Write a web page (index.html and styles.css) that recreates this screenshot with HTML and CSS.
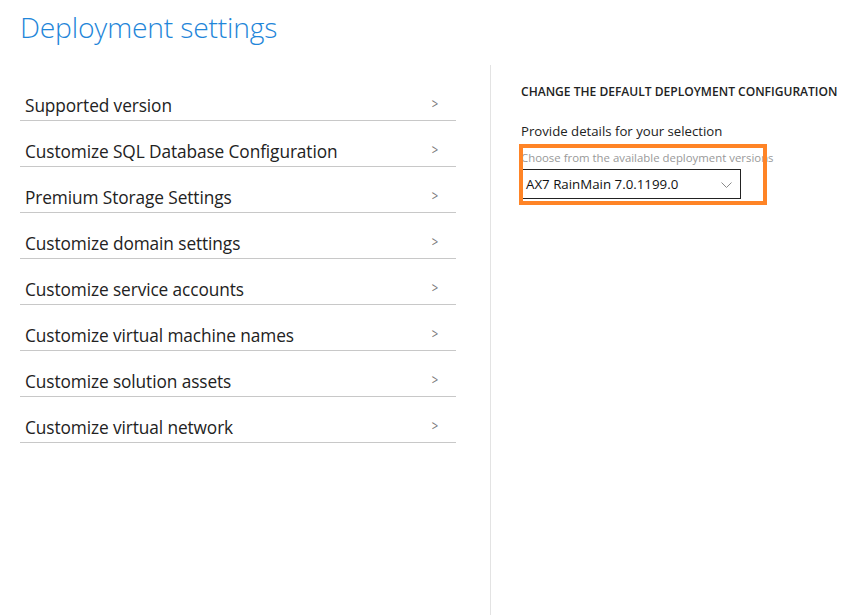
FILE: index.html
```html
<!DOCTYPE html>
<html lang="en">
<head>
<meta charset="utf-8">
<title>Deployment settings</title>
<link rel="stylesheet" href="styles.css">
</head>
<body>
<div class="page">
  <h1 class="title">Deployment settings</h1>
  <div class="columns">
    <ul class="menu">
      <li class="menu-item"><span>Supported version</span><span class="chev">&gt;</span></li>
      <li class="menu-item"><span>Customize SQL Database Configuration</span><span class="chev">&gt;</span></li>
      <li class="menu-item"><span>Premium Storage Settings</span><span class="chev">&gt;</span></li>
      <li class="menu-item"><span>Customize domain settings</span><span class="chev">&gt;</span></li>
      <li class="menu-item"><span>Customize service accounts</span><span class="chev">&gt;</span></li>
      <li class="menu-item"><span>Customize virtual machine names</span><span class="chev">&gt;</span></li>
      <li class="menu-item"><span>Customize solution assets</span><span class="chev">&gt;</span></li>
      <li class="menu-item"><span>Customize virtual network</span><span class="chev">&gt;</span></li>
    </ul>
    <div class="panel">
      <h2 class="panel-heading">CHANGE THE DEFAULT DEPLOYMENT CONFIGURATION</h2>
      <p class="panel-sub">Provide details for your selection</p>
      <div class="field">
        <div class="field-label">Choose from the available deployment versions</div>
        <div class="select">
          <span>AX7 RainMain 7.0.1199.0</span>
          <svg class="select-chev" width="11" height="7" viewBox="0 0 11 7"><path d="M0.5 0.5 L5.5 5.5 L10.5 0.5" fill="none" stroke="#8a8a8a" stroke-width="1"/></svg>
        </div>
        <div class="highlight"></div>
      </div>
    </div>
  </div>
</div>
</body>
</html>
```

FILE: styles.css
```css
* { box-sizing: border-box; }
html, body { margin: 0; padding: 0; background: #fff; }
body {
  font-family: "Open Sans", "Noto Sans", sans-serif;
  color: #222;
  width: 857px;
  height: 615px;
  overflow: hidden;
}
.page { height: 615px; display: flex; flex-direction: column; }
.title {
  margin: 0;
  padding: 9px 0 0 20px;
  height: 65px;
  font-size: 28.3px;
  font-weight: 300;
  color: #1f86d9;
  letter-spacing: -0.2px;
  line-height: 36px;
}
.columns { flex: 1; display: flex; }
.menu {
  list-style: none;
  margin: 10px 0 0 20px;
  padding: 0;
  width: 436px;
}
.menu-item {
  height: 46px;
  border-bottom: 1px solid #c8c8c8;
  display: flex;
  justify-content: space-between;
  align-items: center;
  padding: 15px 17px 0 5px;
  font-size: 17.3px;
  color: #222;
  letter-spacing: -0.1px;
}
.chev {
  font-size: 14px;
  color: #777;
  transform: scaleX(0.8);
  margin-top: -4px;
}
.panel {
  margin-left: 34px;
  border-left: 1px solid #e3e3e3;
  padding: 18px 0 0 30px;
  flex: 1;
}
.panel-heading {
  margin: 0;
  font-size: 12.05px;
  font-weight: 600;
  color: #222;
  letter-spacing: 0;
  line-height: 18px;
  white-space: nowrap;
}
.panel-sub {
  margin: 21px 0 0;
  font-size: 13.2px;
  color: #222;
  line-height: 18px;
}
.field {
  position: relative;
  margin-top: 10px;
  width: 240px;
}
.field-label {
  font-size: 11.4px;
  color: #999;
  line-height: 16px;
  white-space: nowrap;
}
.select {
  margin-top: 3px;
  width: 220px;
  height: 30px;
  border: 1px solid #222;
  display: flex;
  align-items: center;
  justify-content: space-between;
  padding: 0 8px 0 4px;
  font-size: 13.3px;
  color: #111;
}
.select-chev { margin-top: 2px; }
.highlight {
  position: absolute;
  left: -2px;
  top: -6px;
  width: 248px;
  height: 61px;
  border: 4px solid #ff8426;
}
```
